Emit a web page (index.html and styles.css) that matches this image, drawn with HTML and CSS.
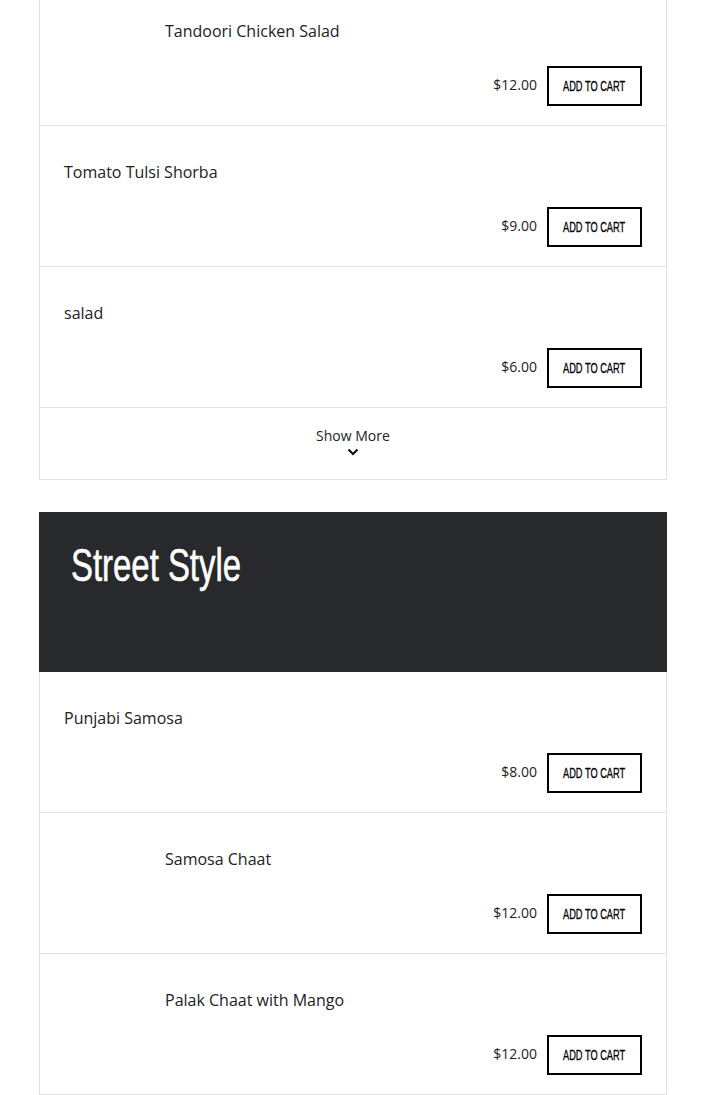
FILE: index.html
```html
<!DOCTYPE html>
<html>
<head>
<meta charset="utf-8">
<link rel="stylesheet" href="styles.css">
</head>
<body>
<div class="page">
  <section class="menu-section">
    <div class="item item-cut">
      <div class="item-head"><div class="thumb"></div><div class="name">Tandoori Chicken Salad</div></div>
      <div class="item-foot"><span class="price">$12.00</span><button class="cart"><span class="cart-label">Add to cart</span></button></div>
    </div>
    <div class="item">
      <div class="item-head"><div class="name">Tomato Tulsi Shorba</div></div>
      <div class="item-foot"><span class="price">$9.00</span><button class="cart"><span class="cart-label">Add to cart</span></button></div>
    </div>
    <div class="item">
      <div class="item-head"><div class="name">salad</div></div>
      <div class="item-foot"><span class="price">$6.00</span><button class="cart"><span class="cart-label">Add to cart</span></button></div>
    </div>
    <div class="show-more">
      <span>Show More</span>
      <svg width="12" height="8" viewBox="0 0 12 8"><path d="M1.5 1.5 L6 6 L10.5 1.5" fill="none" stroke="#111" stroke-width="2.2"/></svg>
    </div>
  </section>

  <section class="menu-section">
    <div class="section-header"><h2><span class="title-text">Street Style</span></h2></div>
    <div class="item">
      <div class="item-head"><div class="name">Punjabi Samosa</div></div>
      <div class="item-foot"><span class="price">$8.00</span><button class="cart"><span class="cart-label">Add to cart</span></button></div>
    </div>
    <div class="item">
      <div class="item-head"><div class="thumb"></div><div class="name">Samosa Chaat</div></div>
      <div class="item-foot"><span class="price">$12.00</span><button class="cart"><span class="cart-label">Add to cart</span></button></div>
    </div>
    <div class="item">
      <div class="item-head"><div class="thumb"></div><div class="name">Palak Chaat with Mango</div></div>
      <div class="item-foot"><span class="price">$12.00</span><button class="cart"><span class="cart-label">Add to cart</span></button></div>
    </div>
  </section>
</div>
</body>
</html>
```
FILE: styles.css
```css
html, body {
  margin: 0;
  padding: 0;
  background: #fff;
}
body {
  font-family: "Open Sans", "Liberation Sans", sans-serif;
  color: #222;
}
.page {
  margin: -15px 38px 0 39px;
  display: flex;
  flex-direction: column;
  gap: 32px;
}
.menu-section {
  display: flex;
  flex-direction: column;
}
.item {
  border: 1px solid #e2e2e2;
  border-top: none;
  padding: 35px 24px 19px 24px;
  display: flex;
  flex-direction: column;
  gap: 24px;
}
.item-head {
  display: flex;
  align-items: center;
  height: 22px;
}
.thumb {
  width: 101px;
  flex: none;
}
.name {
  font-size: 16px;
  line-height: 22px;
  color: #222;
}
.item-foot {
  display: flex;
  justify-content: flex-end;
  align-items: center;
  gap: 10px;
}
.price {
  font-size: 14px;
  color: #222;
  position: relative;
  top: -2px;
}
.cart {
  box-sizing: border-box;
  width: 95px;
  height: 40px;
  border: 2px solid #000;
  background: #fff;
  color: #000;
  padding: 0;
  display: flex;
  align-items: center;
  justify-content: center;
  cursor: pointer;
}
.cart-label {
  display: inline-block;
  text-transform: uppercase;
  font-family: "Liberation Sans", Arial, sans-serif;
  font-size: 14px;
  line-height: 16px;
  white-space: nowrap;
  transform: scaleX(0.66);
  -webkit-text-stroke: 0.3px #000;
}
.show-more {
  border: 1px solid #e2e2e2;
  border-top: none;
  height: 72px;
  box-sizing: border-box;
  display: flex;
  flex-direction: column;
  align-items: center;
  padding-top: 19px;
  font-size: 14px;
  line-height: 18px;
  color: #222;
  gap: 3px;
}
.section-header {
  background: #27292c;
  height: 160px;
  box-sizing: border-box;
  padding: 26px 32px;
}
.section-header h2 {
  margin: 0;
  color: #fff;
  font-weight: normal;
  line-height: 54px;
}
.title-text {
  display: inline-block;
  font-family: "Liberation Sans", Arial, sans-serif;
  font-size: 47px;
  white-space: nowrap;
  transform: scaleX(0.7);
  transform-origin: left center;
  -webkit-text-stroke: 0.6px #fff;
}
```
